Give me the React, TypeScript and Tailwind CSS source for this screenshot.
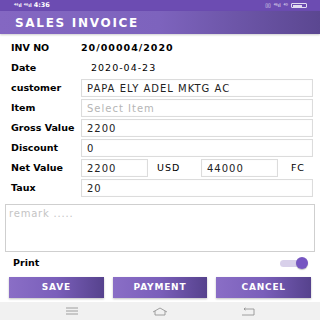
import React from 'react';

const labelCls = "w-[70px] shrink-0 text-[9.5px] font-bold text-black";
const boxCls =
  "h-[18px] border border-[#dcdcdc] shadow-[inset_0_0_1px_rgba(0,0,0,0.08)] bg-white flex items-center px-[5px] text-[10px] tracking-[1px] text-[#222]";

function Row({ label, children }: { label: string; children: React.ReactNode }) {
  return (
    <div className="h-[20px] flex items-center pl-[11px] pr-[7px]">
      <div className={labelCls}>{label}</div>
      <div className="flex-1 flex items-center">{children}</div>
    </div>
  );
}

export default function App() {
  return (
    <div
      className="w-[320px] h-[320px] bg-white overflow-hidden flex flex-col"
      style={{ fontFamily: '"DejaVu Sans", Verdana, sans-serif' }}
    >
      {/* status bar */}
      <div className="h-[11px] bg-[#6c4cb2] flex items-center justify-between pl-[14px] pr-[13px] text-white">
        <div className="flex items-center gap-[2px] text-[6.5px] font-bold">
          <span className="text-[5px] leading-none">⁴⁶ıl</span>
          <span className="text-[5px] leading-none">⁴⁶ıl</span>
          <span>4:36</span>
        </div>
        <div className="flex items-center gap-[3px] text-[5px] text-white/90">
          <span>▯▯</span>
          <span>⁴⁶ıl</span>
          <span>⁴ᴳ</span>
          <div className="w-[16px] h-[5px] border border-white/80 rounded-[1px] flex p-[0.5px]">
            <div className="w-[9px] bg-white/80" />
          </div>
        </div>
      </div>

      {/* header */}
      <div className="h-[23px] bg-gradient-to-r from-[#8467c2] via-[#7d63bd] to-[#5b4791] flex items-center pl-[15px] shadow-[0_1px_2px_rgba(0,0,0,0.2)]">
        <span className="text-white font-bold text-[12px] tracking-[1.7px]">SALES INVOICE</span>
      </div>

      <div className="h-[4px]" />

      <Row label="INV NO">
        <span className="text-[9.5px] font-bold tracking-[1px] text-black">20/00004/2020</span>
      </Row>
      <Row label="Date">
        <span className="ml-[10px] text-[9.5px] tracking-[1px] text-black">2020-04-23</span>
      </Row>
      <Row label="customer">
        <div className={`${boxCls} flex-1`}>PAPA ELY ADEL MKTG AC</div>
      </Row>
      <Row label="Item">
        <div className={`${boxCls} flex-1 text-[#b5b5b5]`}>Select Item</div>
      </Row>
      <Row label="Gross Value">
        <div className={`${boxCls} flex-1`}>2200</div>
      </Row>
      <Row label="Discount">
        <div className={`${boxCls} flex-1`}>0</div>
      </Row>
      <Row label="Net Value">
        <div className={`${boxCls} w-[67px]`}>2200</div>
        <span className="w-[53px] pl-[9px] text-[9.5px] tracking-[1px]">USD</span>
        <div className={`${boxCls} w-[77px]`}>44000</div>
        <span className="flex-1 text-right pr-[8px] text-[9.5px] tracking-[1px]">FC</span>
      </Row>
      <Row label="Taux">
        <div className={`${boxCls} flex-1`}>20</div>
      </Row>

      {/* remark */}
      <div className="mt-[6px] mx-[5px] h-[48px] border border-[#cfcfcf] px-[3px] pt-[1px] text-[10px] tracking-[0.8px] text-[#c4c4c4]">
        remark .....
      </div>

      {/* print */}
      <div className="h-[22px] flex items-center justify-between pl-[13px] pr-[12px]">
        <span className="text-[9.5px] font-bold">Print</span>
        <div className="relative w-[28px] h-[10px] flex items-center">
          <div className="w-[24px] h-[7px] rounded-full bg-[#d8d0ea]" />
          <div className="absolute right-0 w-[12px] h-[12px] rounded-full bg-[#7656c2] shadow-[0_1px_1px_rgba(0,0,0,0.25)]" />
        </div>
      </div>

      {/* buttons */}
      <div className="mt-[3px] h-[21px] flex gap-[9px] px-[9px]">
        {["SAVE", "PAYMENT", "CANCEL"].map((t) => (
          <div
            key={t}
            className="flex-1 bg-gradient-to-r from-[#8a6ec6] via-[#7a5fba] to-[#56428d] flex items-center justify-center text-white font-bold text-[9px] tracking-[0.8px] shadow-[0_1px_2px_rgba(0,0,0,0.25)]"
          >
            {t}
          </div>
        ))}
      </div>

      {/* nav bar */}
      <div className="mt-[4px] flex-1 bg-[#f1f1f1] flex items-center justify-around px-[20px]">
        <svg width="14" height="8" viewBox="0 0 14 8" className="ml-[8px]">
          <path d="M1 1H13M1 4H13M1 7H13" stroke="#8a8a8a" strokeWidth="0.8" fill="none" />
        </svg>
        <svg width="16" height="9" viewBox="0 0 16 9">
          <path d="M1 5L8 1L15 5M3 4V8H13V4" stroke="#8a8a8a" strokeWidth="0.8" fill="none" />
        </svg>
        <svg width="14" height="9" viewBox="0 0 14 9" className="mr-[8px]">
          <path d="M3 2H13V8H1M3 2L4.5 0.8M3 2L4.5 3.2" stroke="#8a8a8a" strokeWidth="0.8" fill="none" />
        </svg>
      </div>
    </div>
  );
}
